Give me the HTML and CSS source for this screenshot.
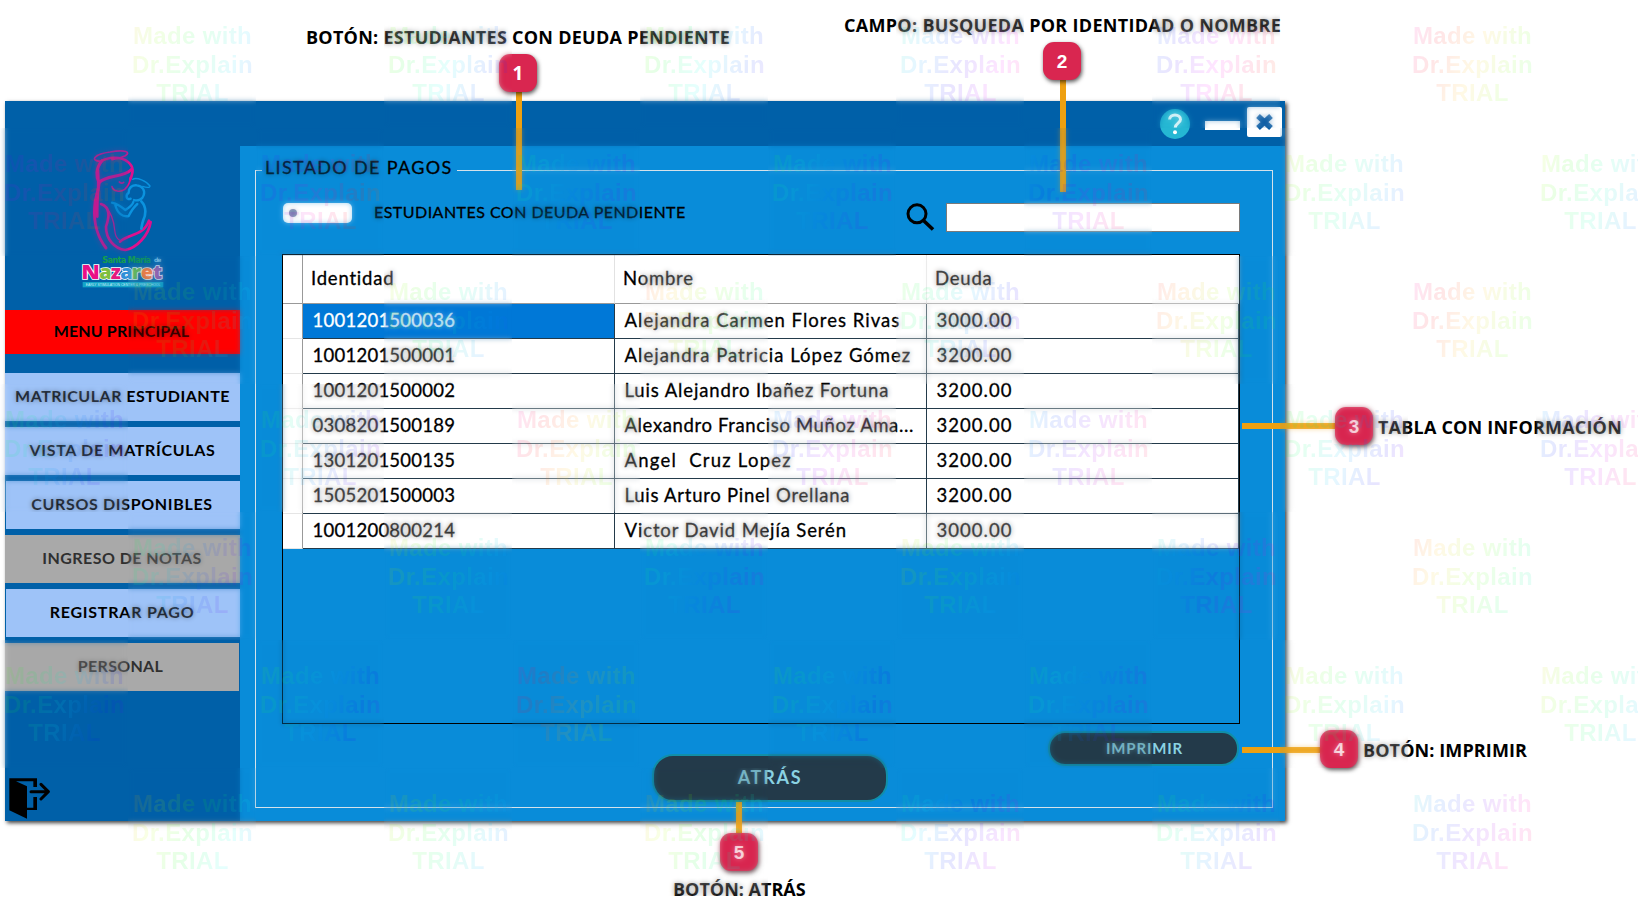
FILE: index.html
```
<!DOCTYPE html>
<html lang="es">
<head>
<meta charset="utf-8">
<title>Listado de pagos</title>
<link rel="stylesheet" href="styles.css">
</head>
<body>
<main class="window">
  <header class="titlebar">
    <svg class="help" width="30" height="30" viewBox="0 0 30 30"><circle cx="15" cy="15" r="15" fill="#25b7d3"/><path d="M9.6 10.6C9.6 7.6 12 5.9 15 5.9s5.500 1.800 5.500 4.600c0 3.600-5.200 3.800-5.200 8" fill="none" stroke="#fff" stroke-width="3"/><circle cx="15" cy="23.2" r="2" fill="#fff"/></svg>
    <span class="minimize"></span>
    <span class="close"><svg width="19" height="18" viewBox="0 0 19 18"><path d="M3 3L16 15M16 3L3 15" stroke="#0a5ba3" stroke-width="5.500"/></svg></span>
  </header>
  <div class="body">
    <nav class="sidebar">
      <svg class="logo" width="85" height="141" viewBox="240 174 255 423">
        <g fill="none" stroke="#dd118e" stroke-linecap="round" stroke-linejoin="round">
          <path d="M302 214C266 212 286 192 330 186C376 178 394 186 376 197C366 202 350 207 336 209" stroke-width="5"/>
          <path d="M300 216C325 198 365 200 384 216C402 230 400 246 391 268" stroke-width="8"/>
          <path d="M306 212C286 236 288 262 297 278C318 254 372 264 395 238" stroke-width="9"/>
          <path d="M297 278C297 304 284 320 284 352C280 402 296 446 318 474" stroke-width="9"/>
          <path d="M294 240C298 290 290 330 292 380" stroke-width="8"/>
          <path d="M391 262C391 284 378 294 374 298C360 308 340 304 336 290M358 276q7 6 13 1" stroke-width="5"/>
          <path d="M303 342C332 352 328 380 318 410C318 446 342 476 376 480C410 474 446 436 452 396" stroke-width="8"/>
          <path d="M316 350C336 370 342 396 344 420C346 438 350 446 358 450" stroke-width="4"/>
          <path d="M360 455C388 430 428 440 447 392" stroke-width="8"/>
        </g>
        <g fill="none" stroke="#0b93df" stroke-linecap="round" stroke-linejoin="round">
          <path d="M398 268C410 260 440 274 450 288C450 294 438 292 428 289" stroke-width="4"/>
          <path d="M386 308C386 292 398 284 411 286C428 288 436 302 431 316C428 328 414 334 402 330M386 308C376 314 378 332 392 326" stroke-width="7"/>
          <path d="M336 338C352 342 364 350 376 360C388 352 398 346 400 336M346 346C352 370 368 382 386 378C392 366 398 354 412 342" stroke-width="7"/>
          <path d="M424 334C442 352 436 378 430 390Q426 400 424 416" stroke-width="8"/>
        </g>
        <text x="307" y="518" class="logo-name" textLength="146">Santa María</text>
        <text x="462" y="515" class="logo-de" textLength="22">de</text>
        <g class="logo-main"><text x="244" y="566" fill="#e90f86" textLength="56" lengthAdjust="spacingAndGlyphs">N</text><text x="298" y="566" fill="#7fbf3f">a</text><text x="332" y="566" fill="#e5197f">z</text><text x="361" y="566" fill="#2f8fd8">a</text><text x="395" y="566" fill="#58b24a">r</text><text x="422" y="566" fill="#ee7135">e</text><text x="459" y="566" fill="#8b55a8">t</text></g>
        <rect x="248" y="576" width="242" height="16" fill="#14a5c8"/>
        <text x="257" y="588" class="logo-tag" textLength="224" lengthAdjust="spacingAndGlyphs">EARLY STIMULATION CENTER &amp; PRESCHOOL</text>
      </svg>
      <a class="item item-main">MENU PRINCIPAL</a>
      <a class="item s50">MATRICULAR ESTUDIANTE</a>
      <a class="item s60">VISTA DE MATRÍCULAS</a>
      <a class="item s65 inset">CURSOS DISPONIBLES</a>
      <a class="item s45 off">INGRESO DE NOTAS</a>
      <a class="item s75 inset">REGISTRAR PAGO</a>
      <a class="item s30 off last">PERSONAL</a>
      <svg class="exit" width="42" height="42" viewBox="0 0 126 126"><path d="M4 4H87V30H76V13H24L57 28V92H76V60H87V99H57V125L4 100Z"/><path d="M69 44H119M99 22L121 44L99 66" fill="none" stroke="#000" stroke-width="9" stroke-linecap="round" stroke-linejoin="round"/></svg>
    </nav>
    <section class="content">
      <fieldset class="group">
        <legend>LISTADO DE PAGOS</legend>
        <div class="filters">
          <span class="toggle"></span>
          <span class="toggle-label">ESTUDIANTES CON DEUDA PENDIENTE</span>
          <svg class="search-icon" width="29" height="29" viewBox="0 0 29 29" fill="none" stroke="#000"><circle cx="11" cy="10.800" r="9" stroke-width="3"/><path d="M17.500 17.500L27 26.500" stroke-width="3.600"/></svg>
          <input class="search" type="text" aria-label="Buscar">
        </div>
        <div class="table-wrap">
          <table>
            <thead><tr><th class="rh"></th><th>Identidad</th><th>Nombre</th><th>Deuda</th></tr></thead>
            <tbody>
              <tr><td class="rh"></td><td class="num selected">1001201500036</td><td class="w1">Alejandra Carmen Flores Rivas</td><td class="amt">3000.00</td></tr>
              <tr><td class="rh"></td><td class="num">1001201500001</td><td class="w1">Alejandra Patricia López Gómez</td><td class="amt">3200.00</td></tr>
              <tr><td class="rh"></td><td class="num">1001201500002</td><td class="w2">Luis Alejandro Ibañez Fortuna</td><td class="amt">3200.00</td></tr>
              <tr><td class="rh"></td><td class="num">0308201500189</td><td class="w4">Alexandro Franciso Muñoz Ama...</td><td class="amt">3200.00</td></tr>
              <tr><td class="rh"></td><td class="num">1301201500135</td><td class="w3">Angel&nbsp; Cruz Lopez</td><td class="amt">3200.00</td></tr>
              <tr><td class="rh"></td><td class="num">1505201500003</td><td class="w5">Luis Arturo Pinel Orellana</td><td class="amt">3200.00</td></tr>
              <tr><td class="rh"></td><td class="num">1001200800214</td><td class="w2">Victor David Mejía Serén</td><td class="amt">3000.00</td></tr>
            </tbody>
          </table>
        </div>
        <div class="actions">
          <button class="btn back">ATRÁS</button>
          <button class="btn print">IMPRIMIR</button>
        </div>
      </fieldset>
    </section>
  </div>
</main>

<!-- numbered callouts pinned over the window -->
<div class="leader l1"></div><div class="badge b1 alt">1</div><div class="note n1">BOTÓN: ESTUDIANTES CON DEUDA PENDIENTE</div>
<div class="leader l2"></div><div class="badge b2">2</div><div class="note n2">CAMPO: BUSQUEDA POR IDENTIDAD O NOMBRE</div>
<div class="leader l3"></div><div class="badge b3">3</div><div class="note n3">TABLA CON INFORMACIÓN</div>
<div class="leader l4"></div><div class="badge b4">4</div><div class="note n4">BOTÓN: IMPRIMIR</div>
<div class="leader l5"></div><div class="badge b5">5</div><div class="note n5">BOTÓN: ATRÁS</div>

<div class="watermarks" id="watermarks"></div>
<script src="script.js"></script>
</body>
</html>
```

FILE: styles.css
```
* { box-sizing: border-box; }
body {
  margin: 0;
  width: 1638px;
  height: 917px;
  overflow: hidden;
  position: relative;
  background: #fff;
  color: #000;
  font-family: Lato, "Open Sans", sans-serif;
}
.window {
  width: 1280px;
  height: 720px;
  margin: 101px 0 0 5px;
  background: #0060a8;
  box-shadow: 2px 2px 4px rgba(0, 0, 0, .75);
  display: flex;
  flex-direction: column;
}
body::before { content: ""; display: table; }
.titlebar {
  height: 45px;
  display: flex;
  justify-content: flex-end;
  align-items: flex-start;
  padding-right: 3px;
}
.help { margin: 8px 15px 0 0; }
.minimize { width: 35px; height: 9px; margin: 20px 7px 0 0; background: #fff; }
.close {
  width: 35px; height: 30px; margin-top: 6px;
  background: #fff; border-radius: 2px;
  display: flex; align-items: center; justify-content: center;
}
.body { flex: 1; display: flex; }
.sidebar { width: 235px; display: flex; flex-direction: column; }
.logo { margin: 2px 0 0 75px; flex: none; }
.logo-name { font: bold 27px "DejaVu Sans Condensed", "DejaVu Sans", sans-serif; fill: #17a04b; }
.logo-de { font: bold 18px "DejaVu Sans", sans-serif; fill: #8fd0f0; }
.logo-main { font: 800 60px "Open Sans", sans-serif; stroke: #fff; stroke-width: 5px; paint-order: stroke; }
.logo-tag { font: 11px "Liberation Sans", sans-serif; fill: #c8f0f8; }
.item {
  flex: none;
  height: 48px;
  margin-bottom: 6px;
  background: #9ec3f8;
  font-weight: bold;
  font-size: 16px;
  line-height: 46px;
  text-align: center;
}
.item-main { height: 44px; line-height: 42px; margin: 21px 0 19px; padding-right: 2px; letter-spacing: .15px; background: #f00; }
.s50 { letter-spacing: .5px; }
.s60 { letter-spacing: .67px; }
.s65 { letter-spacing: .67px; padding-right: 2px; }
.s45 { letter-spacing: .45px; padding-right: 1px; }
.s75 { letter-spacing: .77px; padding-right: 2px; }
.s30 { letter-spacing: .31px; }
.inset { margin-left: 1px; }
.off { background: #a9a9a9; color: #303030; }
.last { margin-right: 1px; padding-right: 3px; }
.exit { margin: 80px 0 0 3px; }

.content { flex: 1; background: #098cd9; padding: 11px 12px 0 15px; }
.group {
  margin: 0;
  width: 1018px;
  height: 651px;
  border: 1px solid #d5e2ea;
  padding: 19px 32px 0 26px;
  min-width: 0;
}
.group legend {
  margin-left: -20px;
  padding: 0 4px 7px 3px;
  font-size: 18px;
  line-height: 20px;
  letter-spacing: 1.34px;
  -webkit-text-stroke: .3px;
}
.filters { height: 29px; display: flex; align-items: flex-start; }
.toggle {
  width: 69px; height: 20px; margin-left: 1px;
  border-radius: 5px; background: #fff;
  padding: 6px 0 0 6px;
}
.toggle::before { content: ""; display: block; width: 8px; height: 8px; border-radius: 50%; background: #6a7ca6; }
.toggle-label { margin-left: 22px; font-size: 16px; line-height: 18px; letter-spacing: .47px; -webkit-text-stroke: .3px; }
.search-icon { margin-left: auto; margin-right: 11px; }
.search { width: 294px; height: 29px; border: 1px solid #7a7a7a; background: #fff; padding: 0; }
.table-wrap { margin-top: 22px; width: 958px; height: 470px; border: 1px solid #000; }
table { width: 956px; table-layout: fixed; border-collapse: separate; border-spacing: 0; background: #fff; font-size: 18.5px; -webkit-text-stroke: .3px; }
th, td { padding: 0 0 2px 9.500px; text-align: left; font-weight: normal; white-space: nowrap; overflow: hidden; }
th { height: 49px; line-height: 46px; padding-left: 8px; letter-spacing: .8px; border-right: 1px solid #e2e2e2; border-bottom: 1px solid #999; }
th:last-child { border-right-color: #fff; }
td { height: 35px; line-height: 32px; border-right: 1px solid #233a4a; border-bottom: 1px solid #233a4a; }
.rh { width: 20px; border-right-color: #999; }
td.rh { border-bottom-color: #e5e5e5; }
.num { letter-spacing: .25px; }
.selected { background: #0078d7; color: #fff; }
.w1 { letter-spacing: 1.02px; }
.w2 { letter-spacing: .87px; }
.w3 { letter-spacing: 1.25px; }
.w4 { letter-spacing: .63px; }
.w5 { letter-spacing: .74px; }
.amt { letter-spacing: 1.04px; }
.actions { margin-top: 7px; display: flex; align-items: flex-start; }
.btn {
  border: 2px solid #118fa8;
  background: #233a4a;
  color: #8ad2e2;
  font-family: Lato, sans-serif;
  font-weight: bold;
  padding: 0;
}
.back { width: 236px; height: 48px; margin: 23px 0 0 370px; border-radius: 21px; font-size: 18px; letter-spacing: 1.75px; padding-bottom: 3px; }
.print { width: 191px; height: 35px; margin: 0 1px 0 auto; border-radius: 17px; font-size: 15px; letter-spacing: .82px; padding: 0 0 2px 2px; }

.badge {
  position: absolute;
  width: 38px; height: 38px;
  border-radius: 11px;
  background: #d92650;
  box-shadow: 1px 2px 4px rgba(0, 0, 0, .65);
  color: #fff;
  font: bold 19px/39px "Liberation Sans", sans-serif;
  text-align: center;
}
.alt { font-family: "Open Sans", sans-serif; }
.leader { position: absolute; width: 6px; background: #eea010; }
.note {
  position: absolute;
  font: bold 18px/20px "Open Sans", sans-serif;
  white-space: nowrap;
}
.l1 { left: 516px; top: 92px; height: 98px; }
.b1 { left: 499px; top: 54px; }
.n1 { left: 306px; top: 27px; letter-spacing: .26px; }
.l2 { left: 1060px; top: 80px; height: 112px; }
.b2 { left: 1043px; top: 42px; }
.n2 { left: 844px; top: 15px; letter-spacing: .3px; }
.l3 { left: 1242px; top: 423px; width: 94px; height: 6px; }
.b3 { left: 1335px; top: 407px; }
.n3 { left: 1378px; top: 417px; letter-spacing: .2px; }
.l4 { left: 1242px; top: 747px; width: 79px; height: 6px; }
.b4 { left: 1320px; top: 730px; }
.n4 { left: 1363px; top: 740px; letter-spacing: .1px; }
.l5 { left: 736px; top: 802px; height: 32px; }
.b5 { left: 720px; top: 833px; }
.n5 { left: 673px; top: 879px; }

/* tiled trial marks laid over the whole sheet */
.watermarks {
  position: absolute;
  inset: 0;
  overflow: hidden;
  pointer-events: none;
  display: grid;
  grid-template-columns: repeat(13, 128px);
  grid-auto-rows: 128px;
}
.tile { position: relative; }
.tile::before {
  content: "";
  position: absolute;
  inset: 0;
  backdrop-filter: blur(2.5px);
  opacity: .38;
}
.mark {
  position: relative;
  height: 128px;
  padding: 22px 0 0 1px;
  text-align: center;
  font: bold 24px/28.5px "Liberation Sans", sans-serif;
  letter-spacing: .35px;
  color: transparent;
  background-clip: text;
  -webkit-background-clip: text;
  opacity: .1;
}
```

FILE: script.js
```
// Starting hue of every mark, row by row; marks alternate columns like a checkerboard.
const hues = [
  [55, 90, 90, 165, 215, 320],
  [250, 230, 130, 130, 200, 70, 75],
  [50, 70, 10, 110, 0, 320],
  [120, 120, 320, 200, 190, 110, 200],
  [130, 60, 130, 60, 170, 10],
  [100, 110, 320, 110, 130, 60, 60],
  [40, 60, 40, 150, 120, 180]
];
const sheet = document.getElementById('watermarks');
hues.forEach((row, r) => {
  row.forEach((hue, i) => {
    const tile = document.createElement('div');
    tile.className = 'tile';
    tile.style.gridRow = r + 1;
    tile.style.gridColumn = i * 2 + (r % 2 ? 1 : 2);
    const mark = document.createElement('div');
    mark.className = 'mark';
    mark.innerHTML = 'Made with<br>Dr.Explain<br>TRIAL';
    const stops = [0, 1, 2, 3, 4].map(n => `hsl(${(hue - 15 + n * 50) % 360} 100% 50%)`);
    mark.style.backgroundImage = `linear-gradient(110deg, ${stops.join(',')})`;
    tile.append(mark);
    sheet.append(tile);
  });
});
```
